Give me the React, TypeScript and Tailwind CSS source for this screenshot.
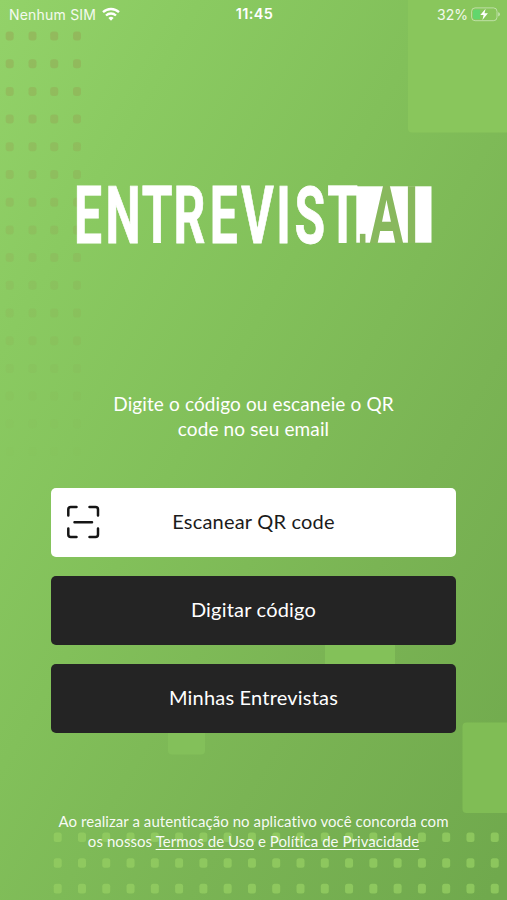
import clsx from "clsx";

const leftColumns = [9.7, 32.5, 54.2, 77];
const leftRows = Array.from({ length: 16 }, (_, i) => 36 + i * 27.7);
const bottomColumns = Array.from({ length: 19 }, (_, i) => 57.7 + i * 24.28);
const bottomRows = [837.3, 863, 888.6];

function Background() {
    return (
        <svg className="absolute inset-0 h-full w-full" viewBox="0 0 507 900" aria-hidden="true">
            <defs>
                <linearGradient id="base" gradientUnits="userSpaceOnUse" x1="0" y1="0" x2="754" y2="431">
                    <stop offset="0" stopColor="#93d269" />
                    <stop offset="0.2" stopColor="#8aca61" />
                    <stop offset="0.44" stopColor="#82c05a" />
                    <stop offset="0.7" stopColor="#7ab454" />
                    <stop offset="1" stopColor="#70a94d" />
                </linearGradient>
            </defs>
            <rect width="507" height="900" fill="url(#base)" />

            {/* Translucent squares */}
            <rect x="408" y="-10" width="110" height="142.5" rx="4" fill="#89c65c" />
            <rect x="325" y="600" width="70" height="80" rx="4" fill="#83c159" />
            <rect x="168" y="700" width="37" height="54.5" rx="4" fill="#83c05a" />
            <rect x="462.5" y="722.5" width="60" height="90.5" rx="4" fill="#80bd55" />

            {/* Dots fading down the left side */}
            {leftRows.map((y, row) =>
                leftColumns.map((x) => (
                    <rect
                        key={`${x}-${y}`}
                        x={x - 4}
                        y={y - 4.5}
                        width="8"
                        height="9"
                        rx="3"
                        fill="#98924c"
                        opacity={Math.max(0, 0.34 - row * 0.022)}
                    />
                ))
            )}

            {/* Dots along the bottom */}
            {bottomRows.map((y) =>
                bottomColumns.map((x) => (
                    <rect key={`${x}-${y}`} x={x - 4} y={y - 4.8} width="8" height="9.6" rx="2.5" fill="#93cd61" opacity="0.8" />
                ))
            )}
        </svg>
    );
}

function StatusBar() {
    return (
        <header className="grid h-7 grid-cols-3 items-center pl-[9px] pr-[7px] font-['Inter',sans-serif] text-[14px] text-white/90">
            <div className="flex items-center gap-[6px]">
                <span className="whitespace-nowrap tracking-[0.2px]">Nenhum SIM</span>
                <svg className="h-[14px] w-[18px]" viewBox="0 0 18 14" fill="none" stroke="white" strokeWidth="2.3">
                    <path d="M1 5.2a11.6 11.6 0 0 1 16 0" />
                    <path d="M4 8.5a7.3 7.3 0 0 1 10 0" />
                    <path d="M6.4 11a3.8 3.8 0 0 1 5.2 0L9 13.8z" fill="white" stroke="none" />
                </svg>
            </div>
            <span className="text-center text-[14.5px] font-semibold tracking-[0.4px] text-white">11:45</span>
            <div className="flex items-center justify-end gap-[3px]">
                <span>32%</span>
                <svg className="h-[15px] w-[29px]" viewBox="0 0 29 15">
                    <rect x="0.6" y="0.9" width="25.4" height="12.8" rx="3.5" fill="none" stroke="white" strokeOpacity="0.45" />
                    <path d="M4 2.4h5v9.8H4a2 2 0 0 1-2-2V4.4a2 2 0 0 1 2-2z" fill="#62d66d" />
                    <path d="M27.3 5.2c2 .6 2 3.6 0 4.2z" fill="white" fillOpacity="0.6" />
                    <path d="M14.6 1.7 9.3 8h3.3L11.4 13l5.5-6.8h-3.4z" fill="white" />
                </svg>
            </div>
        </header>
    );
}

function Logo() {
    return (
        <svg className="h-[100px] w-[360px]" viewBox="74 165 360 100" fontFamily="Roboto, sans-serif" fontSize="79">
            <rect x="356.3" y="186.3" width="75.2" height="56.4" fill="white" />
            <g transform="translate(0 242.7) scale(0.63 1)" fontWeight="700">
                <text fill="white" stroke="white" strokeWidth="0.8" x="117.5 167.5 225 275.5 333 383 438.5 467.5 519.5">
                    ENTREVIST
                </text>
                <text fill="#88b85d" x="567 587 641.5">
                    <tspan fontFamily="Liberation Sans" fontSize="62">.</tspan>AI
                </text>
            </g>
        </svg>
    );
}

function ScanIcon() {
    return (
        <svg
            className="absolute left-[15px] top-[17px] h-[34px] w-[34px]"
            viewBox="0 0 34 34"
            fill="none"
            stroke="#151515"
            strokeWidth="2.5"
            strokeLinecap="round"
            strokeLinejoin="round"
        >
            <path d="M2.3 10.5V4.5a2.5 2.5 0 0 1 2.5-2.5H10.5M23.5 2h6A2.5 2.5 0 0 1 32 4.5V10.5M32 23.5v6a2.5 2.5 0 0 1-2.5 2.5H23.5M10.5 32H4.8a2.5 2.5 0 0 1-2.5-2.5v-6M8.5 17.3h17.5" />
        </svg>
    );
}

interface ActionButtonProps {
    label: string;
    light?: boolean;
}

function ActionButton({ label, light }: ActionButtonProps) {
    return (
        <button
            className={clsx(
                "relative flex h-[68.5px] w-full items-center justify-center rounded-[5px] pb-[2px] text-[20px] tracking-[0.2px]",
                light ? "bg-white text-[#1b1b1b]" : "bg-[#242424] text-white"
            )}
        >
            {light && <ScanIcon />}
            <span className="whitespace-nowrap">{label}</span>
        </button>
    );
}

export default function App() {
    return (
        <div className="relative h-[900px] w-[507px] overflow-hidden font-['Lato',sans-serif]">
            <Background />
            <div className="relative flex h-full flex-col">
                <StatusBar />

                <main className="flex flex-col px-[51px]">
                    <h1 className="mt-[137px] ml-[23px]">
                        <Logo />
                    </h1>

                    <p className="mt-[126px] text-center text-[19px] leading-[25px] tracking-[0.12px] text-white">
                        Digite o código ou escaneie o QR
                        <br />
                        code no seu email
                    </p>

                    <div className="mt-[47px] flex flex-col gap-[19.5px]">
                        <ActionButton label="Escanear QR code" light />
                        <ActionButton label="Digitar código" />
                        <ActionButton label="Minhas Entrevistas" />
                    </div>
                </main>

                <footer className="mt-[78px] text-center text-[15px] leading-[20.5px] tracking-[0.07px] text-white/95">
                    Ao realizar a autenticação no aplicativo você concorda com
                    <br />
                    os nossos{" "}
                    <a className="underline underline-offset-2">Termos de Uso</a>
                    {" "}e{" "}
                    <a className="underline underline-offset-2">Política de Privacidade</a>
                </footer>
            </div>
        </div>
    );
}
